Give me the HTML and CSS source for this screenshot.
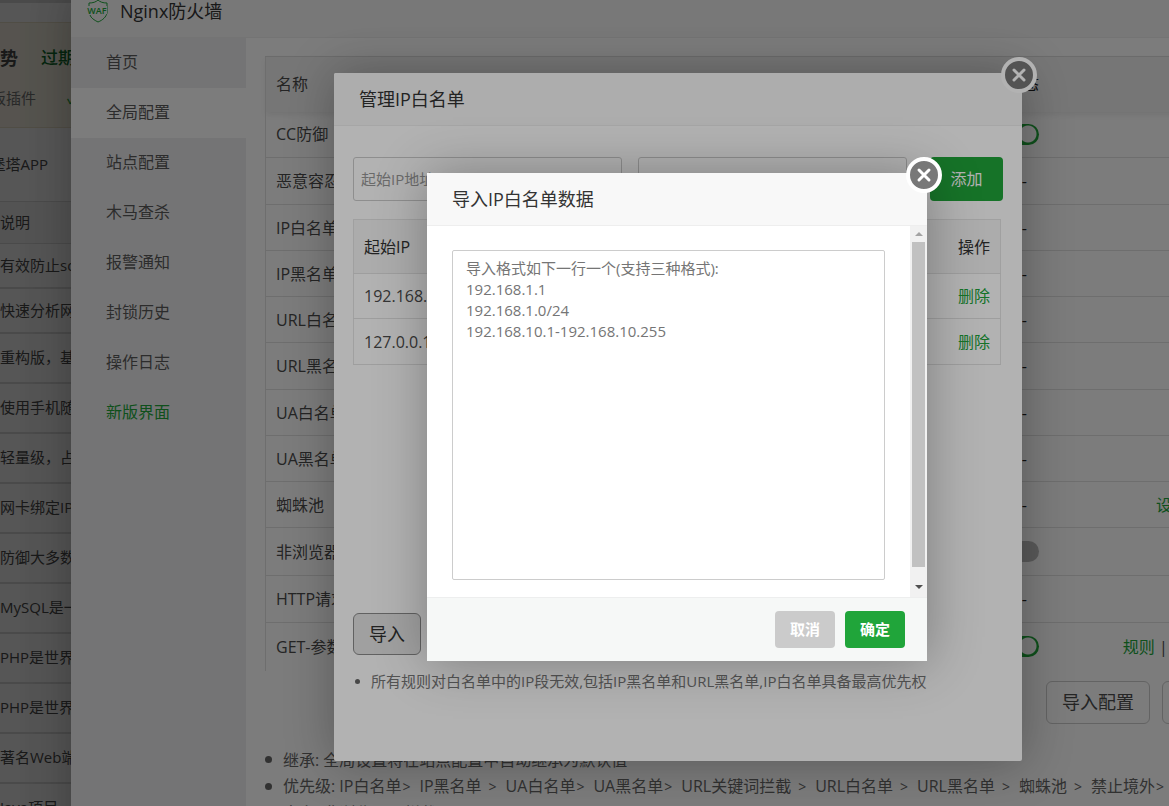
FILE: index.html
```html
<!DOCTYPE html>
<html lang="zh-CN">
<head>
<meta charset="utf-8">
<title>Nginx防火墙</title>
<link rel="stylesheet" href="styles.css">
</head>
<body>
<main class="desktop">
  <section class="store">
    <div class="store-top"></div>
    <div class="store-banner">
      <div class="banner-title"><strong>势</strong><b class="expire">过期时间</b></div>
      <div class="banner-sub"><span class="clip-start"><span>面板插件</span></span><span class="tick">✓</span></div>
    </div>
    <div class="store-tabs"><span class="clip-start"><span>堡塔APP</span></span></div>
    <div class="store-head">说明</div>
    <ul class="store-list">
      <li class="short">有效防止sql注入</li>
      <li class="short">快速分析网站日志</li>
      <li>重构版，基于新内核</li>
      <li>使用手机随时管理</li>
      <li>轻量级，占有内存少</li>
      <li>网卡绑定IP配置</li>
      <li>防御大多数攻击</li>
      <li>MySQL是一种数据库</li>
      <li>PHP是世界上最好的语言</li>
      <li>PHP是世界上最好的语言</li>
      <li>著名Web端管理工具</li>
      <li>Java项目一键部署</li>
    </ul>
  </section>

  <div class="shade"></div>

  <section class="window window-waf">
    <header class="window-title">
      <svg class="waf-icon" viewBox="0 0 24 24" aria-hidden="true">
        <path d="M3 7V4C7 4 10 3 12 1c2 2 5 3 9 3v10c-1 4-4 7-9 9-4-2-7-4-8-7"/>
        <rect x="1" y="7" width="20" height="8"/>
        <text x="11" y="15">WAF</text>
      </svg>
      <span>Nginx防火墙</span>
    </header>
    <div class="waf-body">
      <nav class="waf-nav">
        <a href="#">首页</a>
        <a href="#" class="active">全局配置</a>
        <a href="#">站点配置</a>
        <a href="#">木马查杀</a>
        <a href="#">报警通知</a>
        <a href="#">封锁历史</a>
        <a href="#">操作日志</a>
        <a href="#" class="new-ui">新版界面</a>
      </nav>
      <div class="waf-main">
        <table class="rules">
          <thead><tr><th class="col-name">名称</th><th class="col-state">状态</th><th class="col-ops"></th></tr></thead>
          <tbody>
            <tr><td>CC防御</td><td><input type="checkbox" class="switch" checked aria-label="CC防御"></td><td></td></tr>
            <tr class="tall"><td>恶意容忍度</td><td>--</td><td></td></tr>
            <tr><td>IP白名单</td><td>--</td><td></td></tr>
            <tr><td>IP黑名单</td><td>--</td><td></td></tr>
            <tr><td>URL白名单</td><td>--</td><td></td></tr>
            <tr class="tall"><td>URL黑名单</td><td>--</td><td></td></tr>
            <tr><td>UA白名单</td><td>--</td><td></td></tr>
            <tr><td>UA黑名单</td><td>--</td><td></td></tr>
            <tr><td>蜘蛛池</td><td>--</td><td class="single"><a href="#">设置</a></td></tr>
            <tr class="taller"><td>非浏览器拦截</td><td><input type="checkbox" class="switch" aria-label="非浏览器拦截"></td><td></td></tr>
            <tr class="tall"><td>HTTP请求过滤</td><td>--</td><td></td></tr>
            <tr class="last"><td>GET-参数过滤</td><td><input type="checkbox" class="switch" checked aria-label="GET-参数过滤"></td><td><a href="#">规则</a> | <a href="#">内容</a></td></tr>
          </tbody>
        </table>
        <div class="config-actions">
          <button type="button" class="btn">导入配置</button>
          <button type="button" class="btn">导出</button>
        </div>
        <ul class="notes">
          <li>继承: 全局设置将在站点配置中自动继承为默认值</li>
          <li><span>优先级: IP白名单<i class="near">&gt;</i>IP黑名单<i>&gt;</i>UA白名单<i class="near">&gt;</i>UA黑名单<i class="near">&gt;</i>URL关键词拦截<i>&gt;</i>URL白名单<i>&gt;</i>URL黑名单<i>&gt;</i>蜘蛛池<i>&gt;</i>禁止境外<i class="near">&gt;</i></span></li>
          <li>方向: 非浏览器 &gt; 拦截</li>
        </ul>
      </div>
    </div>
  </section>

  <div class="shade"></div>

  <section class="window window-ip" role="dialog" aria-label="管理IP白名单">
    <header class="window-title">管理IP白名单</header>
    <button type="button" class="close" aria-label="关闭"><svg viewBox="0 0 38 38"><circle cx="19" cy="18" r="16"/><path d="M14 13l10 10M24 13L14 23"/></svg></button>
    <div class="ip-body">
      <form class="ip-form">
        <input type="text" placeholder="起始IP地址" aria-label="起始IP地址">
        <input type="text" aria-label="结束IP地址">
        <button type="button" class="btn-green">添加</button>
      </form>
      <div class="ip-list">
        <table class="ip-table">
          <thead><tr><th>起始IP</th><th>操作</th></tr></thead>
          <tbody>
            <tr><td>192.168.1.1</td><td><a href="#">删除</a></td></tr>
            <tr><td>127.0.0.1</td><td><a href="#">删除</a></td></tr>
          </tbody>
        </table>
      </div>
      <button type="button" class="btn btn-import">导入</button>
      <ul class="ip-notes"><li>所有规则对白名单中的IP段无效,包括IP黑名单和URL黑名单,IP白名单具备最高优先权</li></ul>
    </div>
  </section>

  <div class="shade"></div>

  <section class="window window-import" role="dialog" aria-label="导入IP白名单数据">
    <header class="window-title">导入IP白名单数据</header>
    <button type="button" class="close" aria-label="关闭"><svg viewBox="0 0 38 38"><circle cx="19" cy="18" r="16"/><path d="M14 13l10 10M24 13L14 23"/></svg></button>
    <div class="import-body">
      <div class="import-field">
        <textarea aria-label="导入数据" placeholder="导入格式如下一行一个(支持三种格式):&#10;192.168.1.1&#10;192.168.1.0/24&#10;192.168.10.1-192.168.10.255"></textarea>
      </div>
      <div class="scrollbar" aria-hidden="true"><i class="arrow up"></i><i class="thumb"></i><i class="arrow down"></i></div>
    </div>
    <footer class="import-footer">
      <button type="button" class="act cancel">取消</button>
      <button type="button" class="act confirm">确定</button>
    </footer>
  </section>
</main>
</body>
</html>
```
FILE: styles.css
```css
* { box-sizing: border-box; }

body {
  margin: 0;
  font: 16px/24px "Open Sans", "Noto Sans CJK SC", sans-serif;
  color: #4c4c4c;
}

button, input, textarea { font: inherit; color: inherit; margin: 0; }
a { color: #20a53a; text-decoration: none; }
ul { list-style: none; margin: 0; padding: 0; }
table { border-collapse: collapse; width: 100%; }
th { font-weight: 400; text-align: left; }

.desktop {
  position: relative;
  height: 100vh;
  overflow: hidden;
  background: #fff;
}

.shade { position: absolute; inset: 0; background: rgba(0, 0, 0, .3); }

/* App store page */
.store { font-size: 15px; line-height: 22px; white-space: nowrap; }
.store-top { height: 22px; border-top: 3px solid #ddd; }
.store-banner {
  height: 106px;
  padding: 23px 0 0;
  background: #fcf8e8;
  border: 1px solid #ece4cc;
  border-width: 1px 0;
}
.banner-title { display: flex; gap: 23px; font-size: 18px; line-height: 24px; }
.expire { color: #107030; font-size: 17px; font-weight: 500; }
.banner-sub { display: flex; gap: 31px; padding-top: 17px; color: #777; }
.clip-start { display: flex; justify-content: flex-end; width: 36px; overflow: hidden; }
.clip-start span { flex: none; }
.tick { color: #20a53a; }
.store-tabs { height: 73px; padding-top: 25px; }
.store-tabs .clip-start { width: 48px; }
.store-head {
  height: 43px;
  padding: 9px 0 0;
  background: #f6f6f6;
  border: 1px solid #ddd;
  border-width: 1px 0;
}
.store-list li {
  height: 50px;
  padding-top: 12px;
  border-bottom: 2px solid #ddd;
  background: #fdfdfd;
}
.store-list .short { height: 45px; padding-top: 10px; }

/* Shared window frame */
.window {
  position: absolute;
  background: #fff;
  box-shadow: 1px 1px 50px rgba(0, 0, 0, .3);
  border-radius: 2px;
}
.window-title {
  display: flex;
  align-items: center;
  height: 53px;
  padding: 0 25px;
  background: #f8f8f8;
  border-bottom: 1px solid #eee;
  border-radius: 2px 2px 0 0;
  font-size: 18px;
  color: #333;
}
.close {
  position: absolute;
  top: -16px;
  right: -16px;
  width: 38px;
  height: 38px;
  padding: 0;
  border: 0;
  background: none;
}
.close svg { display: block; }
.close circle { fill: #787878; stroke: #fff; stroke-width: 4; }
.close path { fill: none; stroke: #fff; stroke-width: 3; stroke-linecap: round; }

.btn {
  height: 43px;
  padding: 0 15px;
  border: 1px solid #ccc;
  border-radius: 6px;
  background: #fff;
  font-size: 18px;
  white-space: nowrap;
}

/* Firewall window */
.window-waf {
  top: -15px;
  left: 71px;
  right: -80px;
  bottom: -100px;
  display: flex;
  flex-direction: column;
}
.window-waf .window-title { padding: 0 15px; gap: 10px; flex: none; }
.waf-icon { width: 24px; height: 24px; fill: none; stroke: #20a53a; stroke-width: 1; }
.waf-icon rect { fill: #f8f8f8; stroke: none; }
.waf-icon text {
  fill: #20a53a;
  stroke: none;
  font: 600 9px "Open Sans", sans-serif;
  text-anchor: middle;
}
.waf-body { display: flex; flex: 1; min-height: 0; }
.waf-nav { flex: none; width: 175px; background: #f0f0f1; }
.waf-nav a {
  display: block;
  height: 50px;
  padding-left: 35px;
  line-height: 49px;
  color: #5c5c5c;
}
.waf-nav .active { background: #fff; }
.waf-nav .new-ui { color: #20a53a; }
.waf-main { flex: 1; min-width: 0; padding: 18px 19px 0; }

.rules { table-layout: fixed; border-left: 1px solid #e2e2e2; }
.rules thead { background: #f4f4f4; box-shadow: 0 3px 6px rgba(0, 0, 0, .08); }
.rules th { height: 55px; padding: 0 10px; border-top: 1px solid #ddd; }
.rules td { height: 46px; padding: 0 10px; border-bottom: 1px solid #e2e2e2; white-space: nowrap; }
.rules th:nth-child(2) { text-align: right; color: #222; padding-right: 0; }
.rules td:nth-child(2) { text-align: right; color: #222; padding-right: 12px; }
.rules .tall td { height: 47px; }
.rules .taller td { height: 48px; }
.rules .last td { height: 48px; border-bottom: 0; }
.rules td:nth-child(3) { text-align: right; padding-right: 26px; }
.rules td.single { padding-right: 42px; }
.rules tr > td:has(.switch) { padding-right: 0; }
.col-state { width: 110px; }
.col-ops { width: 191px; }
.switch {
  appearance: none;
  display: block;
  width: 38px;
  height: 21px;
  margin-left: auto;
  border-radius: 11px;
  background: #bbb;
}
.switch:checked {
  background: radial-gradient(circle at 27px 10px, #fff 8px, #20a53a 9px);
}

.config-actions { display: flex; justify-content: flex-end; gap: 12px; padding-top: 10px; }
.notes { padding-top: 23px; line-height: 26px; color: #666; white-space: nowrap; }
.notes i { margin: 0 9px 0 7px; font-style: normal; font-size: 14px; }
.notes .near { margin-left: 1px; }
.notes li, .ip-notes li { display: flex; align-items: center; gap: 11px; }
.notes li::before, .ip-notes li::before {
  content: "";
  flex: none;
  width: 7px;
  height: 7px;
  border-radius: 50%;
  background: #666;
}

/* IP whitelist window */
.window-ip { top: 73px; left: 334px; width: 688px; height: 688px; }
.ip-body { padding: 31px 19px 0; }
.ip-form { display: flex; gap: 16px; }
.ip-form input {
  flex: 1;
  min-width: 0;
  height: 44px;
  padding: 0 7px;
  border: 1px solid #ccc;
  border-radius: 3px;
  background: transparent;
  font-size: 15px;
}
.ip-form input::placeholder { color: #999; }
.btn-green {
  width: 73px;
  height: 44px;
  margin-left: 7px;
  border: 0;
  border-radius: 4px;
  background: #20a53a;
  color: #fff;
}
.ip-list { padding: 18px 2px 0 0; }
.ip-table { border: 1px solid #e6e6e6; }
.ip-table th { height: 54px; padding: 0 10px; background: #f6f6f6; border-bottom: 1px solid #e2e2e2; color: #333; }
.ip-table td { height: 45px; padding: 0 10px; border-bottom: 1px solid #e2e2e2; }
.ip-table tr:last-child td { height: 46px; }
.ip-table tr > :last-child { text-align: right; }
.btn-import { display: block; height: 42px; margin-top: 248px; border-color: #8c8c8c; background: #e6e6e6; color: #333; }
.ip-notes { padding-top: 14px; font-size: 15px; line-height: 24px; color: #777; }
.ip-notes li::before { width: 5px; height: 5px; margin-left: 2px; }

/* Import window */
.window-import { top: 173px; left: 427px; width: 500px; border-radius: 0; }
.import-body { display: flex; }
.import-field { flex: 1; padding: 24px 25px 17px; }
.import-field textarea {
  display: block;
  width: 100%;
  height: 330px;
  padding: 7px 13px;
  border: 1px solid #ccc;
  border-radius: 2px;
  resize: none;
  outline: 0;
  font-size: 15px;
  line-height: 21px;
}
.import-field textarea::placeholder { color: #757575; }
.scrollbar {
  display: flex;
  flex-direction: column;
  align-items: center;
  justify-content: space-between;
  width: 17px;
  padding: 6px 0 8px;
  background: #f1f1f1;
}
.thumb { flex: 1; width: 13px; margin: 6px 0 18px; background: #c1c1c1; }
.arrow { width: 0; height: 0; border: 4px solid transparent; }
.up { border-top: 0; border-bottom: 4px solid #a3a3a3; }
.down { border-bottom: 0; border-top: 4px solid #505050; }
.import-footer {
  display: flex;
  justify-content: flex-end;
  gap: 10px;
  padding: 13px 22px;
  background: #f6f8f7;
  border-top: 1px solid #edeeee;
}
.act {
  width: 60px;
  height: 37px;
  padding: 0 0 2px;
  border: 0;
  border-radius: 4px;
  color: #fff;
  font-size: 15px;
  font-weight: 700;
}
.cancel { background: #cbcbcb; }
.confirm { background: #20a53a; }
```
